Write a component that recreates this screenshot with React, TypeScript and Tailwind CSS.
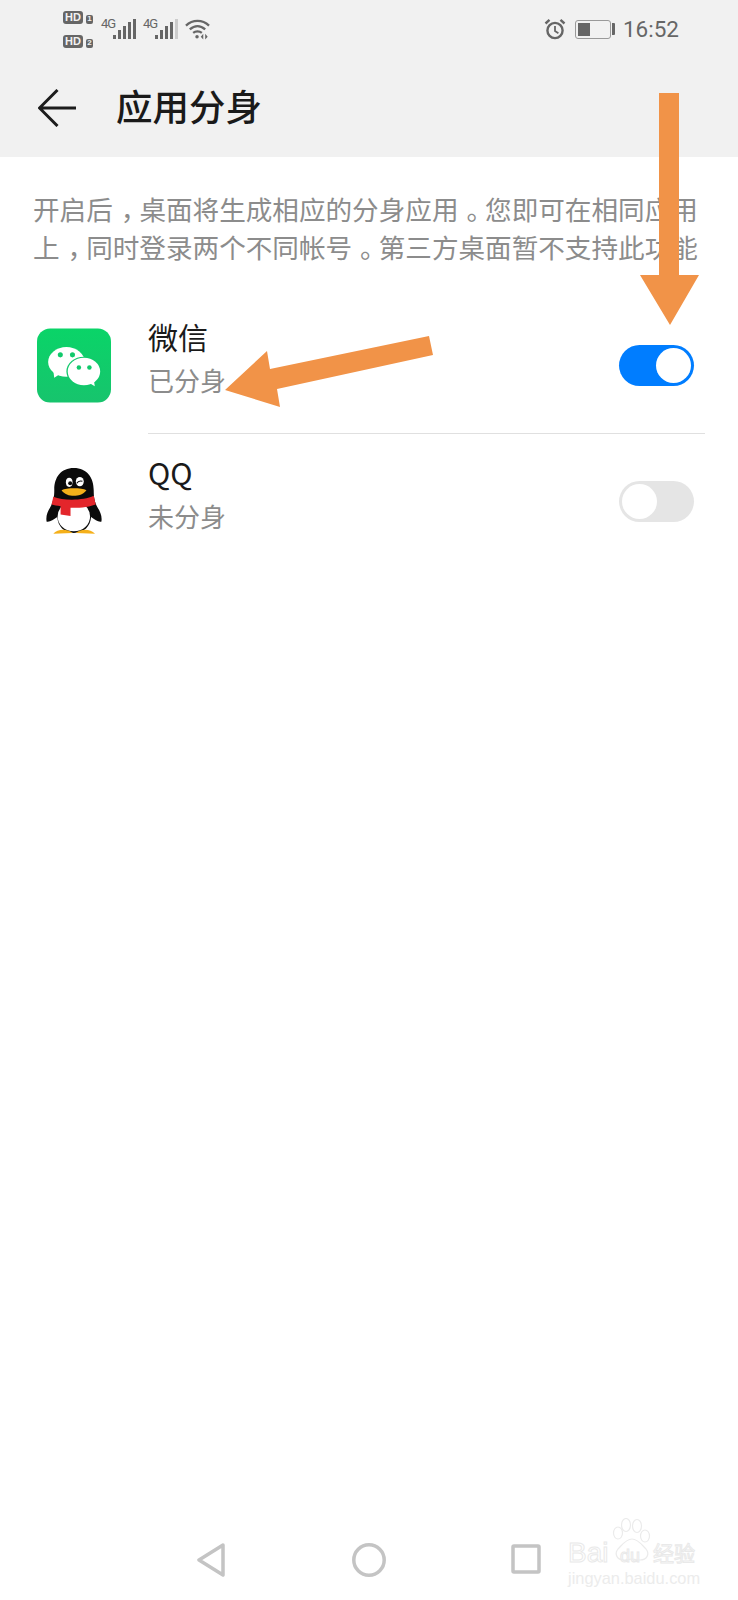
import React from 'react';

const cjk = 'font-["Noto_Sans_CJK_SC","Noto_Sans",sans-serif]';

const SignalBars = ({ weakLast = false }: { weakLast?: boolean }) => (
  <svg width="23" height="22" viewBox="0 0 23 22" fill="#666">
    <rect x="0" y="17" width="3" height="4" />
    <rect x="5" y="12" width="3" height="9" />
    <rect x="10" y="8" width="3" height="13" />
    <rect x="15" y="4" width="3" height="17" />
    <rect x="20" y="1" width="3" height="20" fill={weakLast ? '#ccc' : '#666'} />
  </svg>
);

const Network = () => (
  <div className="flex h-[22px] items-start pt-[1px]">
    <span className="w-[12px] font-['Roboto',sans-serif] text-[13px] leading-[10px] tracking-[-1px] whitespace-nowrap">4G</span>
  </div>
);

const HdBadge = ({ n }: { n: string }) => (
  <div className="flex items-end gap-[3px]">
    <span className="flex h-[13px] w-[20px] items-center justify-center rounded-[3px] bg-[#666] font-['Liberation_Sans',sans-serif] text-[11px] leading-none font-bold text-[#f1f1f1]">
      HD
    </span>
    <span className="flex h-[9px] w-[7px] items-center justify-center rounded-[2px] bg-[#666] font-['Liberation_Sans',sans-serif] text-[8px] leading-none font-bold text-[#f1f1f1]">
      {n}
    </span>
  </div>
);

const StatusBar = () => (
  <div className="flex h-[58px] items-center pr-[59px] pl-[63px] text-[#666]">
    <div className="flex w-[30px] flex-col gap-[11px]">
      <HdBadge n="1" />
      <HdBadge n="2" />
    </div>
    <div className="ml-[8px] flex">
      <Network />
      <SignalBars />
    </div>
    <div className="ml-[7px] flex">
      <Network />
      <SignalBars weakLast />
    </div>
    <svg width="25" height="22" viewBox="0 0 26 22" fill="none" stroke="#666" strokeWidth="2.4" className="ml-[7px]">
      <path d="M1 7.5C8 1 18 1 25 7.5" />
      <path d="M5 11.5C10 7 16 7 21 11.5" />
      <path d="M8.5 15C11 13 15 13 17.5 15" />
      <circle cx="12.5" cy="19" r="1.8" fill="#666" stroke="none" />
      <path d="M19 16v6l-2.6-3zM21 16v6l2.6-3z" fill="#666" stroke="none" />
    </svg>
    <div className="ml-auto flex items-center">
      <svg width="22" height="22" viewBox="0 0 22 22" fill="none" stroke="#666" strokeWidth="2.4">
        <circle cx="11" cy="12.5" r="7.6" />
        <path d="M11 8v5l3.4 2.2" strokeWidth="1.8" />
        <path d="M1.5 5.5 5.5 1.8M20.5 5.5l-4-3.7" />
      </svg>
      <div className="ml-[9px] flex items-center">
        <div className="flex h-[19px] w-[36px] items-center rounded-[3px] border border-[#999] pl-[2px]">
          <div className="h-[13px] w-[12px] bg-[#666]" />
        </div>
        <div className="ml-[1px] h-[12px] w-[3px] rounded-r-[1px] bg-[#666]" />
      </div>
      <span className="ml-[8px] font-['Roboto',sans-serif] text-[22.5px] leading-none">16:52</span>
    </div>
  </div>
);

const WechatIcon = () => (
  <svg width="75" height="75" viewBox="0 0 73 73">
    <defs>
      <linearGradient id="wx" x1="0" y1="0" x2="0" y2="1">
        <stop offset="0" stopColor="#0ad468" />
        <stop offset="1" stopColor="#17c46d" />
      </linearGradient>
    </defs>
    <rect width="73" height="73" rx="13" fill="url(#wx)" />
    <ellipse cx="29" cy="33" rx="18" ry="14.7" fill="#fff" />
    <path d="M16 41l1 7.5 8-5z" fill="#fff" />
    <circle cx="23" cy="26" r="2.5" fill="#10c96b" />
    <circle cx="35" cy="26" r="2.5" fill="#10c96b" />
    <ellipse cx="46.3" cy="42.5" rx="17.3" ry="14.7" fill="#10c96b" />
    <ellipse cx="46.3" cy="42.5" rx="16" ry="13.6" fill="#fff" />
    <path d="M52 54l5 3-1-7z" fill="#fff" />
    <circle cx="41.3" cy="38.5" r="2.2" fill="#10c96b" />
    <circle cx="51.7" cy="38.5" r="2.2" fill="#10c96b" />
  </svg>
);

const QQIcon = () => (
  <svg width="58" height="68" viewBox="45 35 175 205">
    <path
      d="M132 38C92 38 72 68 73 105C73 125 70 135 64 150C56 165 46 180 50 200C60 202 70 194 82 186C84 214 102 234 132 234C163 234 182 214 184 186C196 194 205 202 215 200C219 180 208 165 200 150C194 135 192 125 192 105C192 68 172 38 132 38Z"
      fill="#0b0b0b"
    />
    <ellipse cx="132" cy="184" rx="49" ry="45" fill="#fff" />
    <ellipse cx="118" cy="81" rx="10" ry="14" fill="#fff" />
    <ellipse cx="150" cy="79" rx="12" ry="14" fill="#fff" />
    <circle cx="121" cy="84" r="6" fill="#0b0b0b" />
    <path d="M141 84c4-7 10-8 17-6" fill="none" stroke="#0b0b0b" strokeWidth="3.5" />
    <path d="M95 105C110 97 155 97 170 105C160 118 145 122 132 122C118 122 103 117 95 105Z" fill="#f5b01a" />
    <path d="M70 125C100 137 160 137 192 122L198 148C170 158 145 158 122 158L122 183L92 178L92 153C82 152 72 150 65 148Z" fill="#e3262b" />
    <path d="M70 236C82 222 112 220 128 234ZM138 234C155 220 182 222 196 236Z" fill="#f5b01a" />
  </svg>
);

const Toggle = ({ on }: { on: boolean }) =>
  on ? (
    <div className="flex h-[41px] w-[75px] items-center justify-end rounded-full bg-[#007dff] pr-[3px]">
      <div className="h-[35px] w-[35px] rounded-full bg-white" />
    </div>
  ) : (
    <div className="flex h-[41px] w-[75px] items-center rounded-full bg-[#e5e5e5] pl-[3px]">
      <div className="h-[35px] w-[35px] rounded-full bg-white" />
    </div>
  );

interface RowProps {
  icon: React.ReactNode;
  name: string;
  status: string;
  on: boolean;
  divider?: boolean;
  className?: string;
}

const AppRow = ({ icon, name, status, on, divider, className }: RowProps) => (
  <div className={`flex pr-[33px] pl-[37px] ${className}`}>
    <div className="flex w-[74px] items-center justify-center">{icon}</div>
    <div className={`ml-[37px] flex flex-1 items-center justify-between pr-[11px] ${divider ? 'border-b border-[#e0e0e0]' : ''}`}>
      <div className="mb-[16px] flex flex-col">
        <span className="text-[30px] leading-[45px] text-[#1a1a1a]">{name}</span>
        <span className="text-[26px] leading-[42px] text-[#8c8c8c]">{status}</span>
      </div>
      <Toggle on={on} />
    </div>
  </div>
);

// the screenshot's full stops and commas sit in the middle of their cell
const Punct = ({ children }: { children: string }) => <span className="pl-[0.3em] tracking-[-0.3em]">{children}</span>;

export default function App() {
  return (
    <div className={`relative flex h-[1600px] w-[738px] flex-col overflow-hidden bg-white ${cjk}`}>
      <div className="h-[157px] bg-[#f1f1f1]">
        <StatusBar />
        <div className="flex h-[99px] items-start pl-[38px]">
          <svg width="38" height="38" viewBox="0 0 38 38" fill="none" stroke="#1c1c1c" strokeWidth="3" className="mt-[31px]">
            <path d="M19.5 1 1.5 19l18 18M1.5 19H38" />
          </svg>
          <h1 className="mt-[22px] ml-[40px] text-[36.5px] leading-[52px] font-medium text-[#1a1a1a]">应用分身</h1>
        </div>
      </div>

      <p className="px-[33px] pt-[33px] text-[26.6px] leading-[38px] whitespace-nowrap text-[#8c8c8c]">
        开启后<Punct>，</Punct>桌面将生成相应的分身应用<Punct>。</Punct>您即可在相同应用
        <br />
        上<Punct>，</Punct>同时登录两个不同帐号<Punct>。</Punct>第三方桌面暂不支持此功能
      </p>

      <AppRow icon={<WechatIcon />} name="微信" status="已分身" on divider className="mt-[31px] h-[137px]" />
      <AppRow icon={<QQIcon />} name="QQ" status="未分身" on={false} className="h-[134px]" />

      <div className="mt-auto flex h-[57px] items-start pl-[196px]">
        <svg width="30" height="34" viewBox="0 0 30 34" fill="none" stroke="#c4c4c4" strokeWidth="3.5" strokeLinejoin="round">
          <path d="M27 2 3 17l24 15z" />
        </svg>
        <svg width="34" height="34" viewBox="0 0 34 34" fill="none" stroke="#c4c4c4" strokeWidth="3.5" className="ml-[126px]">
          <circle cx="17" cy="17" r="15.2" />
        </svg>
        <svg width="30" height="30" viewBox="0 0 30 30" fill="none" stroke="#c4c4c4" strokeWidth="3.5" strokeLinejoin="round" className="mt-[1px] ml-[125px]">
          <rect x="2" y="2" width="26" height="26" rx="1" />
        </svg>
      </div>

      {/* baidu watermark */}
      <div className="absolute top-[1518px] left-[568px] w-[134px] text-[#ececec]">
        <svg width="40" height="46" viewBox="0 0 40 46" fill="none" stroke="#ebebeb" strokeWidth="1.2" className="absolute top-0 left-[44px]">
          <ellipse cx="6" cy="15" rx="4.5" ry="6" />
          <ellipse cx="14" cy="7" rx="4.5" ry="6.5" />
          <ellipse cx="25" cy="8" rx="4.5" ry="6.5" />
          <ellipse cx="33" cy="18" rx="4.5" ry="6" />
          <path d="M20 21C14 21 10 27 6 31c-4 5-1 11 6 11 4 0 6-1 8-1s4 1 8 1c7 0 10-6 6-11-4-4-8-10-14-10z" />
        </svg>
        <div className="mt-[21px] flex h-[27px] items-center font-['Liberation_Sans',sans-serif] text-[28px] leading-[27px] text-transparent [-webkit-text-stroke:1px_#e9e9e9]">
          <span className="w-[52px]">Bai</span>
          <span className="mt-[8px] w-[33px] text-[18px]">du</span>
          <span className={`${cjk} text-[21px]`}>经验</span>
        </div>
        <div className="mt-[3px] font-['Liberation_Sans',sans-serif] text-[16.4px] leading-[18px] whitespace-nowrap">jingyan.baidu.com</div>
      </div>

      {/* arrows drawn over the screenshot */}
      <svg width="738" height="1600" viewBox="0 0 738 1600" className="pointer-events-none absolute top-0 left-0" fill="#f19348">
        <path d="M659 93h20v182h20l-29 50-30-50h19z" />
        <path d="M429 336l4 19-156 34 3 18-55-17 42-39 3 18z" />
      </svg>
    </div>
  );
}
